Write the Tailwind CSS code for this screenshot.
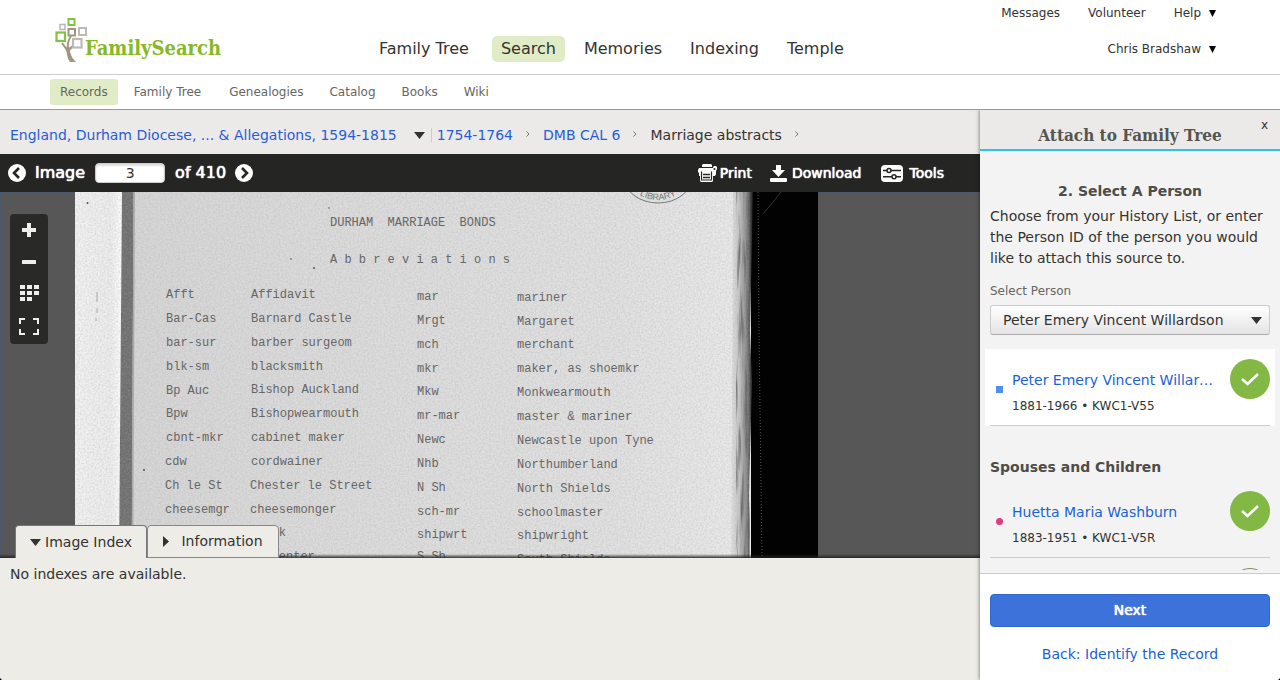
<!DOCTYPE html>
<html lang="en">
<head>
<meta charset="utf-8">
<meta name="viewport" content="width=device-width, initial-scale=1">
<title>FamilySearch - Attach to Family Tree</title>
<script src="https://cdn.jsdelivr.net/npm/@tailwindcss/browser@4"></script>
</head>
<body class="bg-black font-['DejaVu_Sans',Verdana,sans-serif] text-[#333331]">
<div class="flex h-screen flex-col overflow-hidden rounded-b-[4px] bg-white">

  <!-- Site header -->
  <header class="flex h-[75px] shrink-0 items-start border-b border-[#ccc] pr-16 pl-[55px]">
    <a href="#" aria-label="FamilySearch home" class="mt-[17px] flex w-[165px] shrink-0">
      <svg class="h-[46px] w-[34px] shrink-0" viewBox="0 0 34 46" fill="none" aria-hidden="true">
        <path d="M16 44C15 36 11 31 7 26M13.500 37C12 30 13 23 16 19M13 34C15 31 18 29 21 28" stroke="#a09680" stroke-width="2"/>
        <path d="M11.500 30C11.500 39 13 42 15 45H21C16 40 15 36 14.500 30Z" fill="#a09680"/>
        <rect x="13.500" y="2" width="6" height="6" stroke="#84c341" stroke-width="2"/>
        <rect x="5" y="7.500" width="5" height="5" stroke="#bdbab5" stroke-width="1.600"/>
        <rect x="1.500" y="15.500" width="8.500" height="8.500" fill="#fff" stroke="#84c341" stroke-width="2.200"/>
        <rect x="13.500" y="12" width="6.500" height="6.500" fill="#fff" stroke="#a09680" stroke-width="2"/>
        <rect x="24" y="11" width="7" height="7" fill="#fff" stroke="#bdbab5" stroke-width="2"/>
        <rect x="18" y="22" width="8.500" height="8.500" fill="#fff" stroke="#bdbab5" stroke-width="2.200"/>
      </svg>
      <span class="mt-[18px] -ml-1 font-['DejaVu_Serif_Condensed','DejaVu_Serif',serif] text-[20px] leading-[26px] font-bold text-[#87b926]">FamilySearch</span>
    </a>
    <nav aria-label="Main" class="mt-9 ml-[150px] flex gap-[10px] text-[16px] leading-[26px] whitespace-nowrap">
      <a href="#" class="px-[9px]">Family Tree</a>
      <a href="#" class="ml-1 rounded-[5px] bg-[#e0ecc6] px-[9px]">Search</a>
      <a href="#" class="px-[9px]">Memories</a>
      <a href="#" class="px-[9px]">Indexing</a>
      <a href="#" class="px-[9px]">Temple</a>
    </nav>
    <div class="ml-auto flex flex-col items-end gap-5 pt-[5px] text-[12px] leading-4 whitespace-nowrap">
      <div class="flex gap-7">
        <a href="#">Messages</a>
        <a href="#">Volunteer</a>
        <button type="button" class="flex items-center gap-2">Help
          <svg class="h-2 w-[7px]" viewBox="0 0 7 8" aria-hidden="true"><path d="M0 1H7L3.500 8Z" fill="#000"/></svg>
        </button>
      </div>
      <button type="button" class="flex items-center gap-2">Chris Bradshaw
        <svg class="h-2 w-[7px]" viewBox="0 0 7 8" aria-hidden="true"><path d="M0 1H7L3.500 8Z" fill="#000"/></svg>
      </button>
    </div>
  </header>

  <nav aria-label="Search" class="flex h-[35px] shrink-0 items-center gap-[6px] border-b border-[#999] pl-[50px] text-[12px] leading-[26px] text-[#666663]">
    <a href="#" class="rounded-[3px] bg-[#e0ecc6] px-[10px]">Records</a>
    <a href="#" class="px-[10px]">Family Tree</a>
    <a href="#" class="ml-[2px] px-[10px]">Genealogies</a>
    <a href="#" class="px-[10px]">Catalog</a>
    <a href="#" class="px-[10px]">Books</a>
    <a href="#" class="px-[10px]">Wiki</a>
  </nav>

  <div class="flex min-h-0 flex-1">
    <!-- Image viewer -->
    <main class="flex min-w-0 flex-1 flex-col">
      <div class="flex h-11 shrink-0 items-center bg-[#ebeae8] pt-[6px] pl-[10px] text-[14px] leading-5 whitespace-nowrap">
        <a href="#" class="text-[#285ed8]">England, Durham Diocese, ... &amp; Allegations, 1594-1815</a>
        <button type="button" aria-label="More collections" class="ml-[17px]"><svg class="h-[7px] w-[11px]" viewBox="0 0 11 7" aria-hidden="true"><path d="M0 0H11L5.500 7Z" fill="#333"/></svg></button>
        <span class="ml-[6px] h-[14px] border-l border-[#ccc]"></span>
        <a href="#" class="ml-[5px] text-[#285ed8]">1754-1764</a>
        <svg class="mb-[3px] ml-[13px] h-[6px] w-1" viewBox="0 0 4 6" fill="none" stroke="#777" aria-hidden="true"><path d="M.5.5L3 3L.5 5.500"/></svg>
        <a href="#" class="ml-[13px] text-[#285ed8]">DMB CAL 6</a>
        <svg class="mb-[3px] ml-[13px] h-[6px] w-1" viewBox="0 0 4 6" fill="none" stroke="#777" aria-hidden="true"><path d="M.5.5L3 3L.5 5.500"/></svg>
        <span class="ml-[13px]">Marriage abstracts</span>
        <svg class="mb-[3px] ml-[13px] h-[6px] w-1" viewBox="0 0 4 6" fill="none" stroke="#777" aria-hidden="true"><path d="M.5.5L3 3L.5 5.500"/></svg>
      </div>

      <div class="flex h-[38px] shrink-0 items-center bg-[#252523] pr-9 pl-2 text-[14px] whitespace-nowrap text-white">
        <button type="button" aria-label="Previous image"><svg class="size-[18px]" viewBox="0 0 18 18" aria-hidden="true"><circle cx="9" cy="9" r="9" fill="#fff"/><path d="M11 4L6 9L11 14" fill="none" stroke="#252523" stroke-width="2.600"/></svg></button>
        <label for="img" class="ml-[9px] text-[16px] [text-shadow:0_0_1px_#fff,0_0_1px_#fff]">Image</label>
        <input id="img" type="text" value="3" class="mx-[10px] h-5 w-[70px] rounded-[4px] border border-[#ccc] bg-white text-center text-[14px] text-[#333] shadow-[inset_0_2px_2px_#ddd]">
        <span class="text-[16px] [text-shadow:0_0_1px_#fff,0_0_1px_#fff]">of 410</span>
        <button type="button" aria-label="Next image" class="ml-[9px]"><svg class="size-[18px]" viewBox="0 0 18 18" aria-hidden="true"><circle cx="9" cy="9" r="9" fill="#fff"/><path d="M7 4L12 9L7 14" fill="none" stroke="#252523" stroke-width="2.600"/></svg></button>
        <button type="button" class="ml-auto flex items-center gap-[3px] [text-shadow:0_0_1px_#fff,0_0_1px_#fff]">
          <svg class="h-[18px] w-[19px]" viewBox="0 0 19 18" aria-hidden="true"><path d="M4 1L5 0H13L14 1V4H4Z" fill="#fff"/><path d="M4 3.500H14" stroke="#252523"/><path d="M0 6L1 4H15V3L16 2H18L19 3V5L18 7V10L17 12H1V9L0 8Z" fill="#fff"/><circle cx="16.500" cy="5" r="1" fill="#252523"/><path d="M2 8H15V17L14 18H3L2 17Z" fill="#fff"/><path d="M3.500 7.500V16H13.500V7.500" fill="none" stroke="#252523" stroke-width="1.200"/><path d="M5 10.500H12M5 13.500H12" stroke="#252523" stroke-width="1.300"/></svg>Print
        </button>
        <button type="button" class="ml-[18px] flex items-center gap-[5px] [text-shadow:0_0_1px_#fff,0_0_1px_#fff]">
          <svg class="h-[17px] w-[17px]" viewBox="0 0 17 17" fill="#fff" aria-hidden="true"><path d="M6 0H11V5H15L8.500 12L2 5H6Z"/><rect y="13" width="17" height="4" rx="1"/></svg>Download
        </button>
        <button type="button" class="ml-[19px] flex items-center gap-[7px] [text-shadow:0_0_1px_#fff,0_0_1px_#fff]">
          <svg class="h-[17px] w-[22px]" viewBox="0 0 22 17" aria-hidden="true"><rect width="22" height="17" rx="4" fill="#fff"/><path d="M2 5.500H20M2 11.800H20" stroke="#252523" stroke-width="1.500"/><circle cx="8" cy="5.500" r="2" fill="#fff" stroke="#252523" stroke-width="1.500"/><circle cx="13" cy="11.800" r="2" fill="#fff" stroke="#252523" stroke-width="1.500"/></svg>Tools
        </button>
      </div>

      <div class="relative min-h-0 flex-1 overflow-hidden bg-[#575757] shadow-[inset_1px_1px_0_#4c586b]">
        <!-- Scanned page -->
        <svg class="absolute top-0 left-[75px] h-[500px] w-[743px]" viewBox="0 0 743 500" role="img" aria-label="Durham Marriage Bonds abbreviations page">
          <defs>
            <linearGradient id="paper"><stop offset="0" stop-color="#d4d4d4"/><stop offset=".3" stop-color="#dadada"/><stop offset=".8" stop-color="#e1e1e1"/><stop offset="1" stop-color="#eaeaea"/></linearGradient>
            <linearGradient id="left"><stop offset="0" stop-color="#f2f2f2"/><stop offset=".75" stop-color="#ededed"/><stop offset="1" stop-color="#fff"/></linearGradient>
            <linearGradient id="edge"><stop offset="0" stop-color="#e4e4e4"/><stop offset=".4" stop-color="#c4c4c4"/><stop offset=".75" stop-color="#808080"/><stop offset="1" stop-color="#181818"/></linearGradient>
            <filter id="grain" x="0" y="0" width="100%" height="100%"><feTurbulence type="fractalNoise" baseFrequency=".55" numOctaves="2" seed="4"/><feColorMatrix values="0 0 0 0 .4  0 0 0 0 .4  0 0 0 0 .4  .6 0 0 0 -.2"/></filter>
            <filter id="fibre" x="0" y="0" width="100%" height="100%"><feTurbulence type="fractalNoise" baseFrequency=".3 .02" numOctaves="3" seed="9"/><feColorMatrix values="0 0 0 0 .1  0 0 0 0 .1  0 0 0 0 .1  2 0 0 0 -.9"/></filter>
          </defs>
          <rect width="743" height="500" fill="#020202"/>
          <rect width="676" height="500" fill="url(#paper)"/>
          <path d="M0 0H48L45 500H0Z" fill="url(#left)"/>
          <path d="M47 0H58.500L56 500H43Z" fill="#6e6e6e"/>
          <path d="M58.500 0H60L57.500 500H56Z" fill="#aaa"/>
          <path d="M658 0H678L675 140L677 190L674 300L675 500H655L657 200Z" fill="url(#edge)"/>
          <rect width="675" height="500" filter="url(#grain)"/>
          <rect x="661" width="14" height="500" filter="url(#fibre)"/>
          <path d="M683 0L684 140L687 366" stroke="#555" stroke-dasharray="1 2" fill="none"/>
          <path d="M706 0L698 10L688 22" stroke="#333" fill="none"/>
          <g fill="none" stroke="#777"><ellipse cx="583" cy="-15" rx="34" ry="26"/><path d="M22 100V110M22 116V121M21 126V129" stroke="#aaa"/></g>
          <path id="seal" d="M549 -9Q583 25 617 -9" fill="none"/>
          <text font-family="Liberation Sans, sans-serif" font-size="9" fill="#777" text-anchor="middle"><textPath href="#seal" startOffset="50%">LIBRARY</textPath></text>
          <g fill="#555"><circle cx="12.500" cy="11" r="1"/><circle cx="239" cy="76" r="1"/><circle cx="254" cy="16" r=".8"/><circle cx="216" cy="67" r=".8"/><circle cx="69" cy="278" r="1"/></g>
          <g class="whitespace-pre" font-family="Liberation Mono, Courier New, monospace" font-size="12" fill="#666">
            <text x="255" y="34" class="whitespace-pre">DURHAM  MARRIAGE  BONDS</text>
            <text x="255" y="71">A b b r e v i a t i o n s</text>
            <g>
              <text x="91" y="106">Afft</text><text x="91" y="130">Bar-Cas</text><text x="91" y="154">bar-sur</text><text x="91" y="178">blk-sm</text><text x="91" y="202">Bp Auc</text><text x="91" y="225">Bpw</text><text x="91" y="249">cbnt-mkr</text><text x="90" y="273">cdw</text><text x="90" y="297">Ch le St</text><text x="90" y="321">cheesemgr</text>
            </g>
            <g>
              <text x="176" y="106">Affidavit</text><text x="176" y="130">Barnard Castle</text><text x="176" y="154">barber surgeom</text><text x="176" y="178">blacksmith</text><text x="176" y="201">Bishop Auckland</text><text x="176" y="225">Bishopwearmouth</text><text x="176" y="249">cabinet maker</text><text x="176" y="273">cordwainer</text><text x="175" y="297">Chester le Street</text><text x="175" y="321">cheesemonger</text><text x="175" y="344">clerk</text><text x="175" y="368">carpenter</text>
            </g>
            <g>
              <text x="342" y="108">mar</text><text x="342" y="132">Mrgt</text><text x="342" y="156">mch</text><text x="342" y="180">mkr</text><text x="342" y="203">Mkw</text><text x="342" y="227">mr-mar</text><text x="342" y="251">Newc</text><text x="342" y="275">Nhb</text><text x="342" y="299">N Sh</text><text x="342" y="323">sch-mr</text><text x="342" y="346">shipwrt</text><text x="342" y="368">S Sh</text>
            </g>
            <g>
              <text x="442" y="109">mariner</text><text x="442" y="133">Margaret</text><text x="442" y="156">merchant</text><text x="442" y="180">maker, as shoemkr</text><text x="442" y="204">Monkwearmouth</text><text x="442" y="228">master &amp; mariner</text><text x="442" y="252">Newcastle upon Tyne</text><text x="442" y="276">Northumberland</text><text x="442" y="300">North Shields</text><text x="442" y="324">schoolmaster</text><text x="442" y="347">shipwright</text><text x="442" y="371">South Shields</text>
            </g>
          </g>
        </svg>

        <!-- Zoom controls laid over the scan -->
        <div class="absolute top-[22px] left-[10px] flex h-[130px] w-[38px] flex-col items-center justify-between rounded-[4px] bg-[#292927] py-[9px]">
          <button type="button" aria-label="Zoom in"><svg class="h-[14px] w-[14px]" viewBox="0 0 14 14" aria-hidden="true"><path d="M5 0H9V5H14V9H9V14H5V9H0V5H5Z" fill="#eee"/></svg></button>
          <button type="button" aria-label="Zoom out"><svg class="h-[14px] w-[14px]" viewBox="0 0 14 14" aria-hidden="true"><rect y="6" width="14" height="4" rx=".5" fill="#eee"/></svg></button>
          <button type="button" aria-label="Thumbnails"><svg class="h-4 w-[19px]" viewBox="0 0 19 16" fill="#eee" aria-hidden="true"><path d="M0 0H5V4H0ZM7 0H12V4H7ZM14 0H19V4H14ZM0 6H5V10H0ZM7 6H12V10H7ZM14 6H19V10H14ZM0 12H5V16H0ZM7 12H12V16H7Z"/></svg></button>
          <button type="button" aria-label="Full screen"><svg class="h-[17px] w-5" viewBox="0 0 20 17" fill="none" stroke="#eee" stroke-width="2" aria-hidden="true"><path d="M1 6V1H6M14 1H19V6M19 11V16H14M6 16H1V11"/></svg></button>
        </div>

        <div class="absolute inset-x-0 bottom-0 h-1 bg-linear-to-b from-transparent to-[#222]/90"></div>
        <div class="absolute bottom-0 left-[15px] flex text-[14px]">
          <button type="button" class="flex h-[33px] w-[132px] items-center justify-center gap-1 rounded-t-[4px] border border-b-0 border-[#777] bg-[#edece7]"><svg class="h-[7px] w-[11px]" viewBox="0 0 11 7" aria-hidden="true"><path d="M0 0H11L5.500 7Z" fill="#333"/></svg>Image Index</button>
          <button type="button" class="flex h-[33px] w-[132px] items-center justify-center gap-3 rounded-t-[4px] border border-[#888] bg-[#edece7]"><svg class="h-[11px] w-[6px]" viewBox="0 0 6 11" aria-hidden="true"><path d="M0 0V11L6 5.500Z" fill="#333"/></svg>Information</button>
        </div>
      </div>

      <div class="h-[122px] shrink-0 bg-[#edece7] px-[10px] pt-[6px] text-[14px] leading-5">No indexes are available.</div>
    </main>

    <!-- Attach panel -->
    <aside class="relative flex w-[300px] shrink-0 flex-col bg-[#f3f3f3] shadow-[0_0_4px_rgba(0,0,0,0.6)] [clip-path:inset(0_0_0_-6px)]">
      <div class="relative h-[41px] shrink-0 border-b-2 border-[#32bef0] bg-[#ebeae9] pt-3 text-center">
        <h2 class="font-['DejaVu_Serif_Condensed','DejaVu_Serif',serif] text-[17px] leading-[26px] font-bold text-[#555550]">Attach to Family Tree</h2>
        <button type="button" aria-label="Close" class="absolute top-[7px] right-3 text-[12px] leading-4">x</button>
      </div>
      <div class="min-h-0 flex-1 overflow-hidden px-[10px] pt-[29px]">
        <h3 class="text-center text-[14px] leading-[22px] font-bold text-[#4d4d48]">2. Select A Person</h3>
        <p class="mt-1 text-[14px] leading-[21px] whitespace-nowrap">Choose from your History List, or enter<br>the Person ID of the person you would<br>like to attach this source to.</p>
        <label for="person" class="mt-[13px] block text-[12px] leading-[18px] text-[#666663]">Select Person</label>
        <div class="relative mt-[5px]">
          <select id="person" class="block h-[30px] w-full appearance-none rounded-[3px] border border-[#ccc] border-b-[#aaa] bg-linear-to-b from-white to-[#e4e4e4] pl-3 text-[14px]"><option>Peter Emery Vincent Willardson</option></select>
          <svg class="pointer-events-none absolute top-3 right-2 h-[7px] w-[11px]" viewBox="0 0 11 7" aria-hidden="true"><path d="M0 0H11L5.500 7Z" fill="#333"/></svg>
        </div>
        <div class="-mx-[5px] mt-[14px] bg-white px-[5px]">
          <div class="flex h-[77px] items-start border-b border-[#ccc]">
            <span class="mt-[37px] ml-[6px] size-[7px] shrink-0 bg-[#4f8ff2]"></span>
            <div class="mt-[21px] ml-[9px] min-w-0 flex-1">
              <a href="#" class="block truncate text-[14px] leading-5 text-[#1b62d6]">Peter Emery Vincent Willardson</a>
              <p class="mt-[7px] text-[12px] leading-[18px]">1881-1966 • KWC1-V55</p>
            </div>
            <button type="button" aria-label="Selected: Peter Emery Vincent Willardson" class="mt-[10px] ml-[14px] shrink-0"><svg class="size-10" viewBox="0 0 40 40" aria-hidden="true"><circle cx="20" cy="20" r="20" fill="#84b845"/><path d="M12 20L17.500 25L28 15" fill="none" stroke="#fff" stroke-width="2.600"/></svg></button>
          </div>
        </div>
        <h3 class="mt-[30px] text-[14px] leading-[22px] font-bold text-[#4d4d48]">Spouses and Children</h3>
        <div class="mt-[3px] flex h-[77px] items-start border-b border-[#ccc]">
          <span class="mt-[37px] ml-[6px] size-[7px] shrink-0 rounded-full bg-[#e23a7c]"></span>
          <div class="mt-[21px] ml-[9px] min-w-0 flex-1">
            <a href="#" class="block truncate text-[14px] leading-5 text-[#1b62d6]">Huetta Maria Washburn</a>
            <p class="mt-[7px] text-[12px] leading-[18px]">1883-1951 • KWC1-V5R</p>
          </div>
          <button type="button" aria-label="Selected: Huetta Maria Washburn" class="mt-[10px] ml-[14px] shrink-0"><svg class="size-10" viewBox="0 0 40 40" aria-hidden="true"><circle cx="20" cy="20" r="20" fill="#84b845"/><path d="M12 20L17.500 25L28 15" fill="none" stroke="#fff" stroke-width="2.600"/></svg></button>
        </div>
        <div class="mt-[10px] flex justify-end"><span class="size-10 rounded-full border border-[#8b8468]"></span></div>
      </div>
      <div class="mt-[3px] h-[107px] shrink-0 border-t border-[#ccc] bg-white px-[10px] pt-5 text-center text-[14px]">
        <button type="button" class="block h-[33px] w-full rounded-[4px] border border-[#2f66d2] bg-[#3d72db] text-white [text-shadow:0_0_1px_#fff,0_0_1px_#fff]">Next</button>
        <a href="#" class="mt-[17px] inline-block leading-5 text-[#1b62d6]">Back: Identify the Record</a>
      </div>
    </aside>
  </div>
</div>
</body>
</html>
